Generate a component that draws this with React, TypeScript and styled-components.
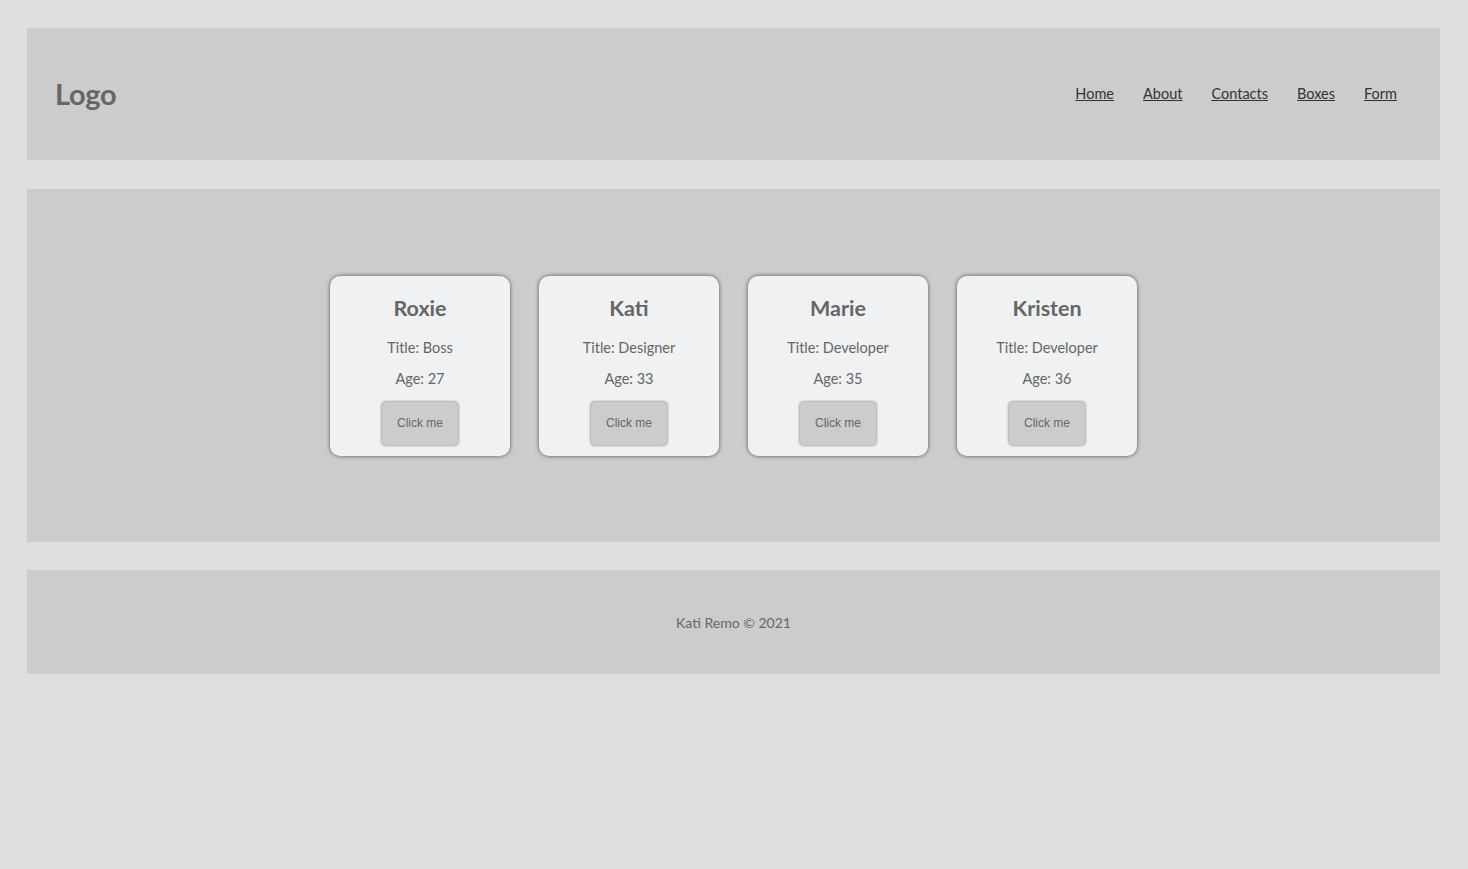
import React from "react";
import styled, { createGlobalStyle } from "styled-components";

const Global = createGlobalStyle`
  html, body { margin: 0; padding: 0; background: #e0dfdd; }
  body { font-family: Lato, "Open Sans", sans-serif; color: #666; }
`;

const Page = styled.div`
  padding: 28px 28px 28px 27px;
  display: flex;
  flex-direction: column;
  gap: 29px;
`;

const Header = styled.header`
  height: 132px;
  background: #cccccc;
  display: flex;
  align-items: center;
  justify-content: space-between;
  padding: 0 43px 4px 28px;
  box-sizing: border-box;
`;

const Logo = styled.div`
  font-size: 29px;
  font-weight: 700;
  color: #666;
  letter-spacing: -0.3px;
  padding-top: 3px;
`;

const Nav = styled.nav`
  display: flex;
  gap: 29px;
  padding-top: 2px;
`;

const NavLink = styled.a`
  font-size: 14.5px;
  color: #333;
  text-decoration: underline;
  cursor: pointer;
`;

const Main = styled.main`
  height: 353px;
  background: #cccccc;
  display: flex;
  align-items: center;
  justify-content: center;
  gap: 29px;
`;

const Card = styled.div`
  width: 180px;
  height: 180px;
  box-sizing: border-box;
  background: #f0f1f3;
  border-radius: 10px;
  box-shadow: 0 0 4px rgba(0, 0, 0, 0.6);
  display: flex;
  flex-direction: column;
  align-items: center;
  padding-top: 19px;
`;

const Name = styled.h2`
  margin: 0;
  font-size: 21.5px;
  font-weight: 700;
  color: #666;
  line-height: 26px;
`;

const Info = styled.p<{ $top: number }>`
  margin: ${(p) => p.$top}px 0 0;
  font-size: 14.5px;
  line-height: 18px;
  color: #666;
`;

const Button = styled.button`
  margin-top: 14px;
  width: 76px;
  height: 43px;
  background: #cccccc;
  border: none;
  border-radius: 4px;
  box-shadow: 0 0 3px rgba(0, 0, 0, 0.6);
  font-family: "Liberation Sans", Arial, sans-serif;
  font-size: 12px;
  color: #666;
  cursor: pointer;
`;

const Footer = styled.footer`
  height: 104px;
  margin-top: -1px;
  background: #cccccc;
  display: flex;
  align-items: center;
  justify-content: center;
  font-size: 14px;
  color: #666;
`;

const people = [
  { name: "Roxie", title: "Boss", age: 27 },
  { name: "Kati", title: "Designer", age: 33 },
  { name: "Marie", title: "Developer", age: 35 },
  { name: "Kristen", title: "Developer", age: 36 },
];

export default function App() {
  return (
    <>
      <Global />
      <Page>
        <Header>
          <Logo>Logo</Logo>
          <Nav>
            {["Home", "About", "Contacts", "Boxes", "Form"].map((l) => (
              <NavLink key={l}>{l}</NavLink>
            ))}
          </Nav>
        </Header>
        <Main>
          {people.map((p) => (
            <Card key={p.name}>
              <Name>{p.name}</Name>
              <Info $top={18}>Title: {p.title}</Info>
              <Info $top={13}>Age: {p.age}</Info>
              <Button>Click me</Button>
            </Card>
          ))}
        </Main>
        <Footer>Kati Remo © 2021</Footer>
      </Page>
    </>
  );
}
